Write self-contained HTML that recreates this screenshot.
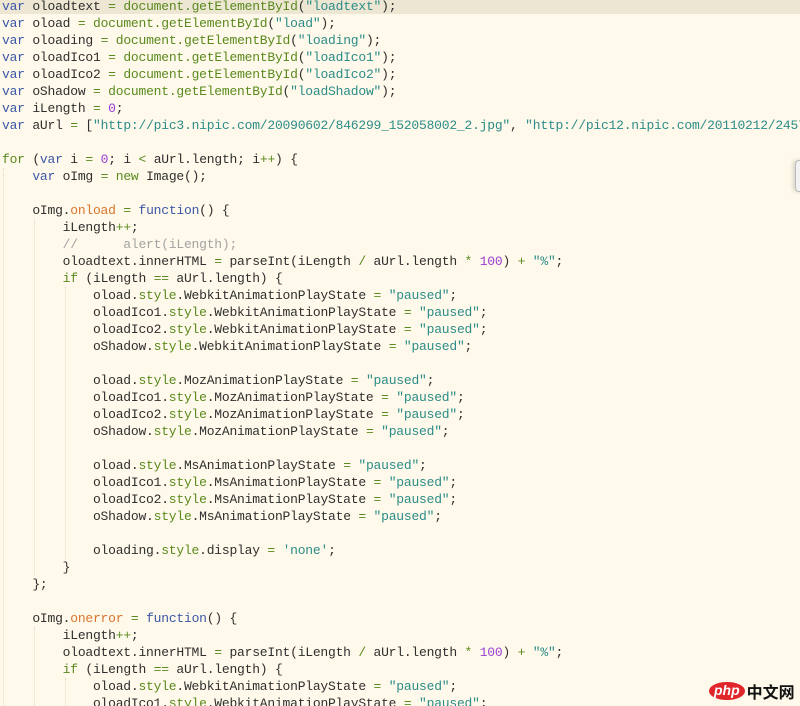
<!DOCTYPE html>
<html><head><meta charset="utf-8"><style>
html,body{margin:0;padding:0;background:#fef9ea;width:800px;height:706px;overflow:hidden;position:relative}
pre{margin:0;position:absolute;left:2px;top:-2px;font-family:"Liberation Mono",monospace;font-size:13px;letter-spacing:-0.22px;line-height:17px;color:#2f2f2f;white-space:pre}
.hl{position:absolute;left:0;top:-2px;width:800px;height:16px;background:#ece6d3}
.k{color:#3b57a8}.c{color:#5a8a1e}.s{color:#2b8c88}.n{color:#9d3ed4}.p{color:#d9752c}.m{color:#a3a3a3}
.g{position:absolute;width:0;border-left:1px dotted #e0dac8}
.sb{position:absolute;left:795px;top:160px;width:10px;height:30px;background:#f2f2f2;border:1px solid #bbb;border-radius:4px;box-shadow:-2px 0 4px rgba(0,0,0,.15)}
.logo{position:absolute;left:709px;top:679px;font-family:"Liberation Sans","Noto Sans CJK SC",sans-serif;font-size:16px;font-weight:bold}
.logo .php{display:inline-block;background:#e0262b;color:#fff;border-radius:50%;padding:0 5px;font-style:italic;font-size:14px;height:18px;line-height:17px;vertical-align:middle}
.logo .cn{color:#111;vertical-align:middle;margin-left:2px}
</style></head><body>
<div class="hl"></div>
<div class="g" style="left:3px;top:168px;height:540px"></div>
<div class="g" style="left:34px;top:219px;height:357px"></div>
<div class="g" style="left:65px;top:287px;height:272px"></div>
<div class="g" style="left:34px;top:627px;height:80px"></div>
<div class="g" style="left:65px;top:678px;height:30px"></div>
<pre><span class="k">var</span> oloadtext <span class="c">=</span> <span class="c">document.getElementById</span>(<span class="s">"loadtext"</span>);
<span class="k">var</span> oload <span class="c">=</span> <span class="c">document.getElementById</span>(<span class="s">"load"</span>);
<span class="k">var</span> oloading <span class="c">=</span> <span class="c">document.getElementById</span>(<span class="s">"loading"</span>);
<span class="k">var</span> oloadIco1 <span class="c">=</span> <span class="c">document.getElementById</span>(<span class="s">"loadIco1"</span>);
<span class="k">var</span> oloadIco2 <span class="c">=</span> <span class="c">document.getElementById</span>(<span class="s">"loadIco2"</span>);
<span class="k">var</span> oShadow <span class="c">=</span> <span class="c">document.getElementById</span>(<span class="s">"loadShadow"</span>);
<span class="k">var</span> iLength <span class="c">=</span> <span class="n">0</span>;
<span class="k">var</span> aUrl <span class="c">=</span> [<span class="s">"http://pic3.nipic.com/20090602/846299_152058002_2.jpg"</span>, <span class="s">"http://pic12.nipic.com/20110212/2457</span>

<span class="c">for</span> (<span class="k">var</span> i <span class="c">=</span> <span class="n">0</span>; i <span class="c">&lt;</span> aUrl.length; i<span class="c">++</span>) {
    <span class="k">var</span> oImg <span class="c">=</span> <span class="c">new</span> Image();

    oImg.<span class="p">onload</span> <span class="c">=</span> <span class="k">function</span>() {
        iLength<span class="c">++</span>;
        <span class="m">//      alert(iLength);</span>
        oloadtext.innerHTML <span class="c">=</span> parseInt(iLength <span class="c">/</span> aUrl.length <span class="c">*</span> <span class="n">100</span>) <span class="c">+</span> <span class="s">"%"</span>;
        <span class="c">if</span> (iLength <span class="c">==</span> aUrl.length) {
            oload.<span class="c">style</span>.WebkitAnimationPlayState <span class="c">=</span> <span class="s">"paused"</span>;
            oloadIco1.<span class="c">style</span>.WebkitAnimationPlayState <span class="c">=</span> <span class="s">"paused"</span>;
            oloadIco2.<span class="c">style</span>.WebkitAnimationPlayState <span class="c">=</span> <span class="s">"paused"</span>;
            oShadow.<span class="c">style</span>.WebkitAnimationPlayState <span class="c">=</span> <span class="s">"paused"</span>;

            oload.<span class="c">style</span>.MozAnimationPlayState <span class="c">=</span> <span class="s">"paused"</span>;
            oloadIco1.<span class="c">style</span>.MozAnimationPlayState <span class="c">=</span> <span class="s">"paused"</span>;
            oloadIco2.<span class="c">style</span>.MozAnimationPlayState <span class="c">=</span> <span class="s">"paused"</span>;
            oShadow.<span class="c">style</span>.MozAnimationPlayState <span class="c">=</span> <span class="s">"paused"</span>;

            oload.<span class="c">style</span>.MsAnimationPlayState <span class="c">=</span> <span class="s">"paused"</span>;
            oloadIco1.<span class="c">style</span>.MsAnimationPlayState <span class="c">=</span> <span class="s">"paused"</span>;
            oloadIco2.<span class="c">style</span>.MsAnimationPlayState <span class="c">=</span> <span class="s">"paused"</span>;
            oShadow.<span class="c">style</span>.MsAnimationPlayState <span class="c">=</span> <span class="s">"paused"</span>;

            oloading.<span class="c">style</span>.display <span class="c">=</span> <span class="s">'none'</span>;
        }
    };

    oImg.<span class="p">onerror</span> <span class="c">=</span> <span class="k">function</span>() {
        iLength<span class="c">++</span>;
        oloadtext.innerHTML <span class="c">=</span> parseInt(iLength <span class="c">/</span> aUrl.length <span class="c">*</span> <span class="n">100</span>) <span class="c">+</span> <span class="s">"%"</span>;
        <span class="c">if</span> (iLength <span class="c">==</span> aUrl.length) {
            oload.<span class="c">style</span>.WebkitAnimationPlayState <span class="c">=</span> <span class="s">"paused"</span>;
            oloadIco1.<span class="c">style</span>.WebkitAnimationPlayState <span class="c">=</span> <span class="s">"paused"</span>;
</pre>
<div class="sb"></div>
<div class="logo"><span class="php">php</span><span class="cn">中文网</span></div>
</body></html>
